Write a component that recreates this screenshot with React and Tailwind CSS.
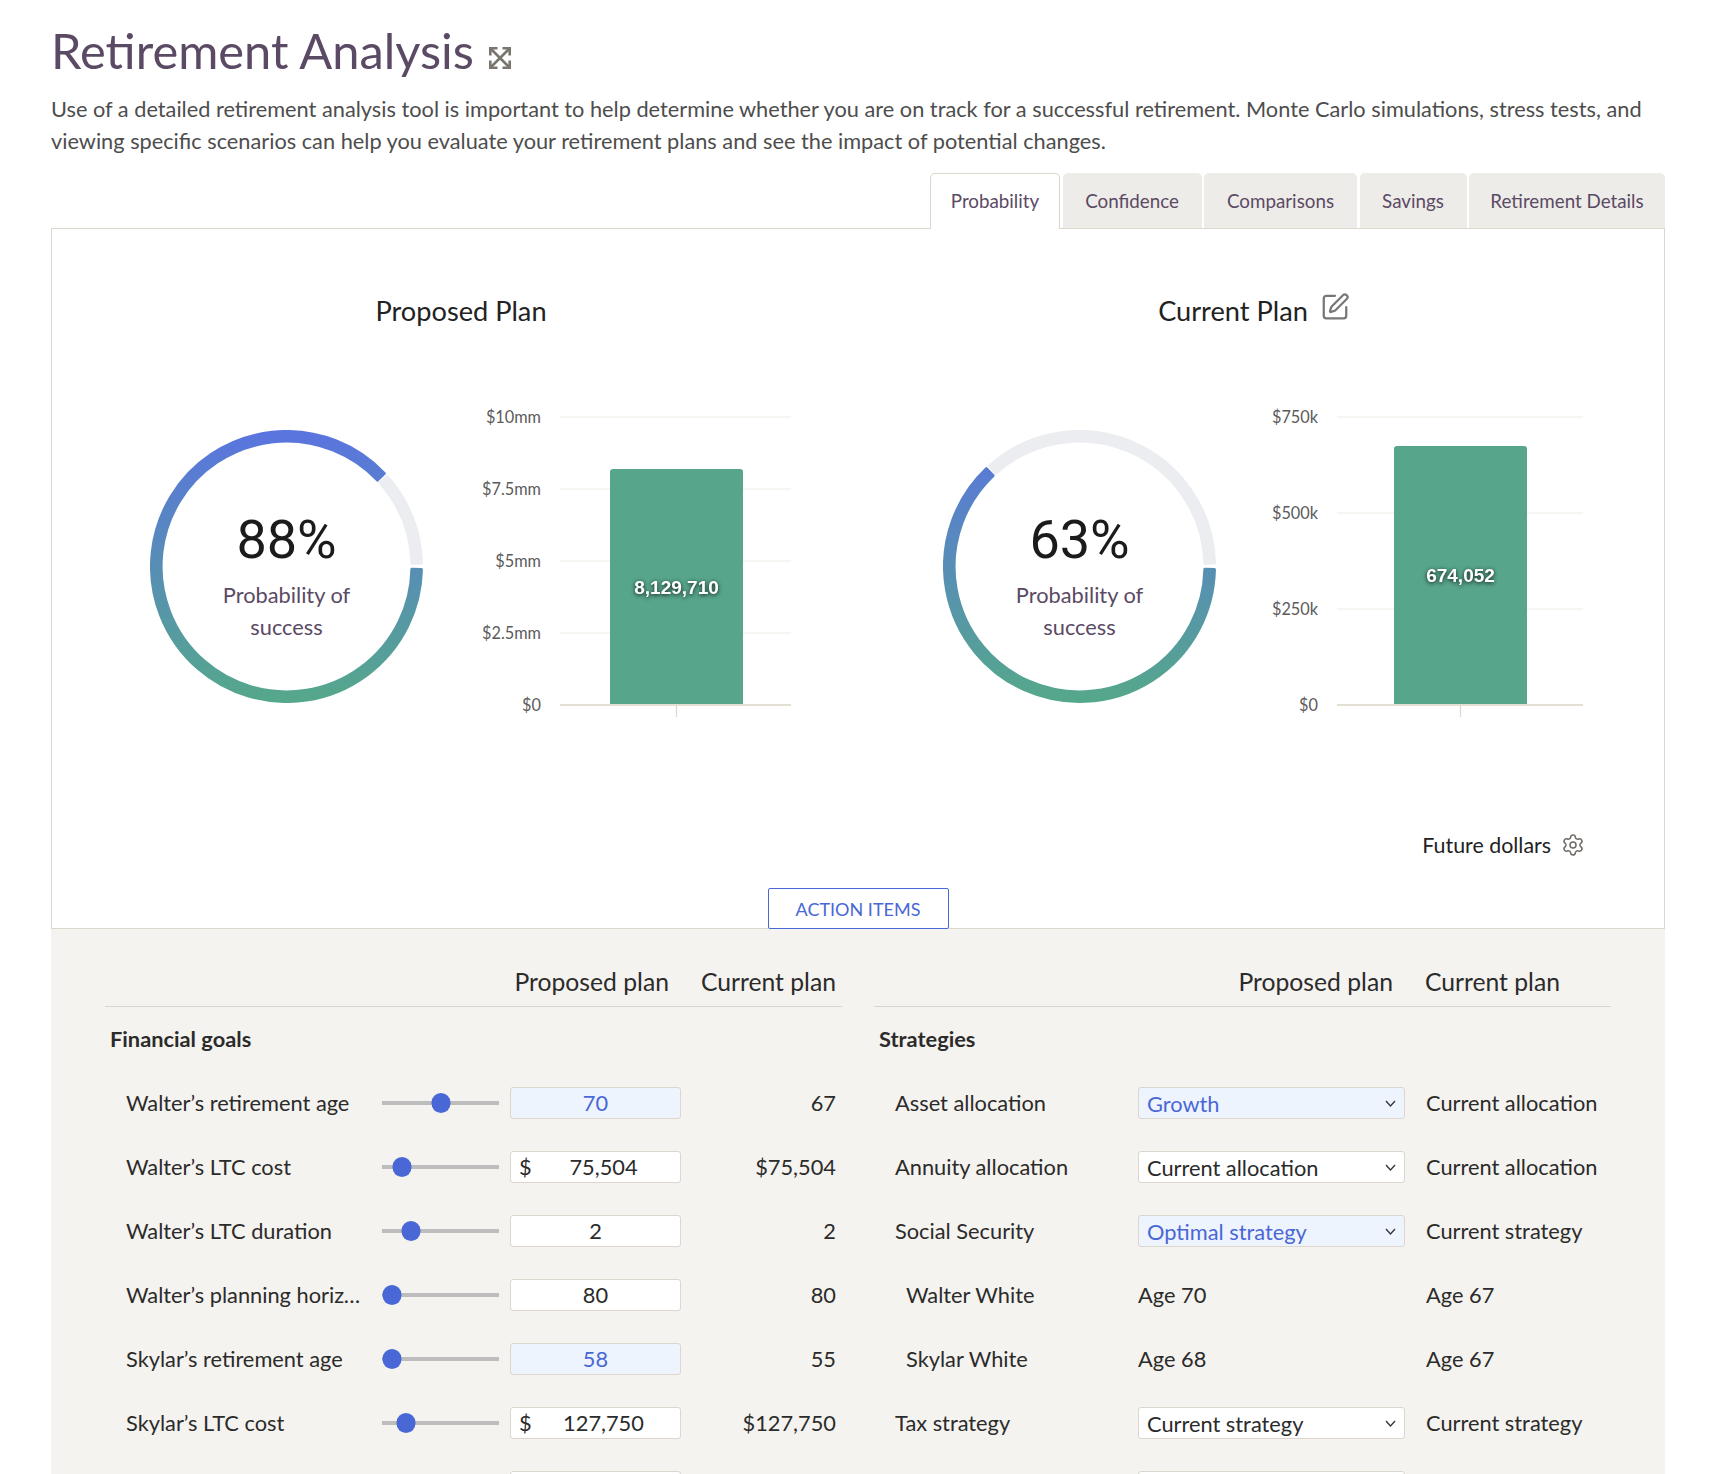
import React from 'react';
import { SquarePen, Settings } from 'lucide-react';

const tabs = [
  { label: 'Probability', width: 'w-[130px]', active: true },
  { label: 'Confidence', width: 'w-[139px]' },
  { label: 'Comparisons', width: 'w-[153px]' },
  { label: 'Savings', width: 'w-[107px]' },
  { label: 'Retirement Details', width: 'w-[196px]' },
];

// thumb = px offset of the thumb centre along the 117px track
const goals = [
  { label: 'Walter’s retirement age', thumb: 58.5, value: '70', current: '67', changed: true },
  { label: 'Walter’s LTC cost', thumb: 19.5, value: '75,504', current: '$75,504', money: true },
  { label: 'Walter’s LTC duration', thumb: 29, value: '2', current: '2' },
  { label: 'Walter’s planning horizon', thumb: 9.5, value: '80', current: '80' },
  { label: 'Skylar’s retirement age', thumb: 9.5, value: '58', current: '55', changed: true },
  { label: 'Skylar’s LTC cost', thumb: 24, value: '127,750', current: '$127,750', money: true },
  { label: '', thumb: 9.5, value: '', current: '' },
];

const strategies = [
  { label: 'Asset allocation', select: 'Growth', current: 'Current allocation', changed: true },
  { label: 'Annuity allocation', select: 'Current allocation', current: 'Current allocation' },
  { label: 'Social Security', select: 'Optimal strategy', current: 'Current strategy', changed: true },
  { label: 'Walter White', text: 'Age 70', current: 'Age 67', nested: true },
  { label: 'Skylar White', text: 'Age 68', current: 'Age 67', nested: true },
  { label: 'Tax strategy', select: 'Current strategy', current: 'Current strategy' },
  { label: '', select: '', current: '' },
];

function ExpandIcon() {
  return (
    <svg width="24" height="24" viewBox="0 0 24 24" fill="none" stroke="#7a756f" strokeWidth="2.6">
      <path d="M3 3l18 18M21 3L3 21" />
      <path d="M9.5 2.3H2.3v7.2M14.5 2.3h7.2v7.2M9.5 21.7H2.3v-7.2M14.5 21.7h7.2v-7.2" />
    </svg>
  );
}

function Chevron() {
  return (
    <svg width="11" height="7" viewBox="0 0 11 7" fill="none" stroke="#333" strokeWidth="1.3">
      <path d="M1 1l4.5 5L10 1" />
    </svg>
  );
}

// ring segment as a filled shape, so its ends get the small rounded corners
function sector(from, to) {
  const c = 136.5;
  const outer = 135;
  const inner = 125.4;
  const pt = (r, pct) => {
    const a = (pct / 100) * 2 * Math.PI;
    return `${(c + r * Math.cos(a)).toFixed(2)} ${(c + r * Math.sin(a)).toFixed(2)}`;
  };
  const large = to - from > 50 ? 1 : 0;
  return `M${pt(outer, from)}A${outer} ${outer} 0 ${large} 1 ${pt(outer, to)}L${pt(inner, to)}A${inner} ${inner} 0 ${large} 0 ${pt(inner, from)}Z`;
}

function Donut({ id, percent, label }) {
  return (
    <div className="relative w-[273px] h-[273px] shrink-0">
      <svg width="273" height="273" viewBox="0 0 273 273" fill="none" strokeLinejoin="round" strokeWidth="3">
        <defs>
          <linearGradient id={id} gradientUnits="userSpaceOnUse" x1="0" y1="0" x2="0" y2="273">
            <stop offset="0" stopColor="#5a74e0" />
            <stop offset="1" stopColor="#55a88a" />
          </linearGradient>
        </defs>
        <path d={sector(percent + 0.4, 99.6)} fill="#ecedf1" stroke="#ecedf1" />
        <path d={sector(0.35, percent - 0.1)} fill={`url(#${id})`} stroke={`url(#${id})`} />
      </svg>
      <div className="absolute inset-0 flex flex-col items-center pt-[80px]">
        <div className="text-[54px] leading-[60px] text-[#1b1b1b] [font-family:Roboto,sans-serif]">{label}</div>
        <div className="mt-[9px] text-center text-[#5a4a64]">Probability of<br />success</div>
      </div>
    </div>
  );
}

function BarChart({ width, axisX, right, ticks, bar }) {
  return (
    <svg width={width} height="330" viewBox={`0 0 ${width} 330`} className="shrink-0">
      {ticks.map((t) => (
        <g key={t.label}>
          <line x1={axisX} x2={right} y1={t.y} y2={t.y} stroke={t.y > 300 ? '#e3dfd5' : '#f3f2ed'} strokeWidth={t.y > 300 ? 2 : 1.6} />
          <text x={axisX - 19} y={t.y + 6} textAnchor="end" fontSize="16.3" fill="#5b5b5b">{t.label}</text>
        </g>
      ))}
      <path d={`M${bar.x} 304V${bar.top + 3}a3 3 0 0 1 3 -3H${bar.x + 130}a3 3 0 0 1 3 3V304Z`} fill="#57a58b" />
      <line x1={bar.x + 66.5} x2={bar.x + 66.5} y1="305" y2="317" stroke="#dcd8ce" strokeWidth="1.2" />
      <text x={bar.x + 66.5} y={bar.labelY} textAnchor="middle" fontSize="19" fontWeight="700" fill="#fff" className="[font-family:'Liberation_Sans',sans-serif] [filter:drop-shadow(0_1px_2px_rgba(0,0,0,0.85))]">{bar.label}</text>
    </svg>
  );
}

function Slider({ thumb }) {
  return (
    <div className="relative w-[117px] h-[4px] bg-[#bdbdbd] shrink-0">
      <div className="absolute top-1/2 -translate-x-1/2 -translate-y-1/2 w-[19px] h-[20px] rounded-full bg-[#4a67d6]" style={{ left: `${thumb}px` }}></div>
    </div>
  );
}

function GoalRow({ row }) {
  return (
    <div className="flex items-center h-8 pl-[21px] pr-[6px]">
      <div className="w-[256px] pr-[19px] truncate shrink-0">{row.label}</div>
      <Slider thumb={row.thumb} />
      <div className={`ml-[11px] w-[171px] h-8 shrink-0 flex items-center border border-[#dcd6cc] rounded-[3px] ${row.changed ? 'bg-[#eef4fd] text-[#4a67d6]' : 'bg-white'}`}>
        {row.money && <span className="w-[8px] ml-[8px] shrink-0">$</span>}
        <span className="flex-1 text-center">{row.value}</span>
      </div>
      <div className="flex-1 text-right">{row.current}</div>
    </div>
  );
}

function StrategyRow({ row }) {
  return (
    <div className="flex items-center h-8 pl-[21px]">
      <div className={`w-[243px] shrink-0 ${row.nested ? 'pl-[11px]' : ''}`}>{row.label}</div>
      <div className="w-[267px] shrink-0">
        {row.text ? row.text : (
          <div className={`h-8 flex items-center justify-between pl-[8px] pr-[8px] border border-[#dcd6cc] rounded-[3px] ${row.changed ? 'bg-[#eef4fd] text-[#4a67d6]' : 'bg-white'}`}>
            <span className="pt-[2px]">{row.select}</span>
            <Chevron />
          </div>
        )}
      </div>
      <div className="ml-[21px]">{row.current}</div>
    </div>
  );
}

export default function App() {
  return (
    <div className="h-[1474px] overflow-hidden bg-white pl-[51px] pr-[55px] pt-[23px] [font-family:Lato,sans-serif] text-[21.8px] leading-[32px] text-[#2b2b2b]">
      <div className="flex items-center h-[56px]">
        <h1 className="-mt-[3px] text-[48.8px] leading-[56px] text-[#5b4a64]">Retirement Analysis</h1>
        <span className="ml-[14px] mt-[14px]"><ExpandIcon /></span>
      </div>
      <p className="mt-[14px] text-[21.75px] text-[#4d4d4d]">
        Use of a detailed retirement analysis tool is important to help determine whether you are on track for a successful retirement. Monte Carlo simulations, stress tests, and viewing specific scenarios can help you evaluate your retirement plans and see the impact of potential changes.
      </p>

      {/* Tabs */}
      <div className="mt-[16px] flex justify-end gap-[2.5px] text-[18.8px] text-[#5a4a64]">
        {tabs.map((tab) => (
          <div
            key={tab.label}
            className={`${tab.width} text-center rounded-t-[5px] ${tab.active ? 'h-[56px] pt-[11px] -mb-px relative z-10 bg-white border border-b-0 border-[#dcd6cc]' : 'h-[55px] pt-[12px] bg-[#eeece8]'}`}
          >
            {tab.label}
          </div>
        ))}
      </div>

      {/* Chart panel */}
      <div className="h-[701px] border border-[#dcd6cc] bg-white">
        <div className="flex">
          <div className="w-[818px] shrink-0">
            <div className="mt-[64px] h-9 text-center text-[27.2px] leading-9 text-[#222]">Proposed Plan</div>
            <div className="mt-[71px] flex items-start">
              <div className="ml-[98px] mt-[30px]"><Donut id="grad-a" percent={88} label="88%" /></div>
              <div className="ml-[47px]">
                <BarChart
                  width={325}
                  axisX={90}
                  right={321}
                  ticks={[{ label: '$10mm', y: 17 }, { label: '$7.5mm', y: 89 }, { label: '$5mm', y: 161 }, { label: '$2.5mm', y: 233 }, { label: '$0', y: 305 }]}
                  bar={{ x: 140, top: 69, label: '8,129,710', labelY: 194 }}
                />
              </div>
            </div>
          </div>
          <div className="flex-1">
            <div className="mt-[64px] h-9 flex items-center justify-center gap-[12px] pr-[26px] text-[27.2px] text-[#222]">
              <span>Current Plan</span>
              <SquarePen size={30} strokeWidth={1.8} className="-mt-[9px] text-[#777]" />
            </div>
            <div className="mt-[71px] flex items-start">
              <div className="ml-[73px] mt-[30px]"><Donut id="grad-b" percent={63} label="63%" /></div>
              <div className="ml-[54px]">
                <BarChart
                  width={320}
                  axisX={67}
                  right={313}
                  ticks={[{ label: '$750k', y: 17 }, { label: '$500k', y: 113 }, { label: '$250k', y: 209 }, { label: '$0', y: 305 }]}
                  bar={{ x: 124, top: 46, label: '674,052', labelY: 182 }}
                />
              </div>
            </div>
          </div>
        </div>
        <div className="mt-[99px] h-8 flex items-center justify-end gap-[10px] pr-[79px] text-[21.4px] text-[#222]">
          <span>Future dollars</span>
          <Settings size={24} strokeWidth={1.5} className="text-[#6f6a66]" />
        </div>
        <div className="mt-[27px] mx-auto w-[181px] h-[41px] flex items-center justify-center border border-[#4a67d6] rounded-[2px] bg-white text-[18px] text-[#4a67d6]">ACTION ITEMS</div>
      </div>

      {/* Plan inputs */}
      <div className="bg-[#f5f3ef] px-[54px] pt-[37px] pb-10 grid grid-cols-2 gap-x-8">
        <div>
          <div className="flex justify-end gap-8 pr-[6px] pb-2 border-b border-[#d9d5cc] text-[24.7px]">
            <span>Proposed plan</span>
            <span>Current plan</span>
          </div>
          <div className="mt-[16px] pl-[5px] font-bold">Financial goals</div>
          <div className="mt-[32px] flex flex-col gap-8">
            {goals.map((row, i) => <GoalRow key={i} row={row} />)}
          </div>
        </div>
        <div>
          <div className="flex justify-end gap-8 pr-[51px] pb-2 border-b border-[#d9d5cc] text-[24.7px]">
            <span>Proposed plan</span>
            <span>Current plan</span>
          </div>
          <div className="mt-[16px] pl-[5px] font-bold">Strategies</div>
          <div className="mt-[32px] flex flex-col gap-8">
            {strategies.map((row, i) => <StrategyRow key={i} row={row} />)}
          </div>
        </div>
      </div>
    </div>
  );
}
